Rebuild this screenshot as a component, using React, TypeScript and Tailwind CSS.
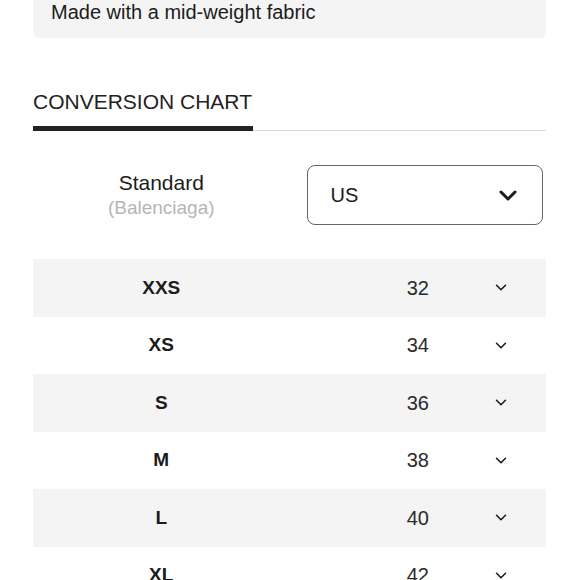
const sizes = [
    { label: 'XXS', value: '32' },
    { label: 'XS', value: '34' },
    { label: 'S', value: '36' },
    { label: 'M', value: '38' },
    { label: 'L', value: '40' },
    { label: 'XL', value: '42' },
];

function Chevron({ className, strokeWidth }: { className: string; strokeWidth: number }) {
    return (
        <svg viewBox="0 0 18 11" className={className} fill="none" stroke="currentColor" strokeWidth={strokeWidth} strokeLinecap="round" strokeLinejoin="round">
            <path d="M2 2l7 7 7-7" />
        </svg>
    );
}

export default function App() {
    return (
        <div className="min-h-[580px] bg-white font-['Liberation_Sans',Arial,sans-serif] text-[#1c1c1c]">
            <div className="px-[33px] pr-[34px]">
                {/* Details box */}
                <div className="-mt-[16px] rounded-md bg-[#f4f4f4] px-[18px] pt-[16px] pb-[14px]">
                    <p className="text-[20px] leading-[24px]">Made with a mid-weight fabric</p>
                </div>

                {/* Conversion chart header */}
                <div className="mt-[52px]">
                    <h2 className="text-[21px] leading-[24px] text-[#222]">CONVERSION CHART</h2>
                    <div className="mt-[12px] flex items-end">
                        <div className="h-[5px] w-[220px] bg-[#222]" />
                        <div className="h-px flex-1 bg-[#d9d9d9]" />
                    </div>
                </div>

                {/* Standard select */}
                <div className="mt-[34px] grid grid-cols-2 items-center">
                    <div className="text-center">
                        <div className="text-[21px] leading-[26px]">Standard</div>
                        <div className="text-[19px] leading-[24px] text-[#b5b5b5]">(Balenciaga)</div>
                    </div>
                    <div className="ml-[17px] mr-[3px] flex h-[60px] items-center justify-between rounded-lg border border-[#666] pr-[25px] pl-[23px]">
                        <span className="text-[20px]">US</span>
                        <Chevron className="h-[11px] w-[18px]" strokeWidth={3} />
                    </div>
                </div>

                {/* Sizes */}
                <div className="mt-[34px]">
                    {sizes.map((s, i) => (
                        <div key={s.label} className={`grid h-[57.5px] grid-cols-2 items-center ${i % 2 === 0 ? 'bg-[#f4f4f4]' : 'bg-white'}`}>
                            <div className="text-center text-[19px] font-bold">{s.label}</div>
                            <div className="grid grid-cols-[1fr_auto_1fr] items-center">
                                <div />
                                <span className="text-[20px] text-[#2a2a2a]">{s.value}</span>
                                <div className="flex justify-end pr-[39px]">
                                    <Chevron className="h-[7px] w-[12px]" strokeWidth={2.5} />
                                </div>
                            </div>
                        </div>
                    ))}
                </div>
            </div>
        </div>
    );
}
